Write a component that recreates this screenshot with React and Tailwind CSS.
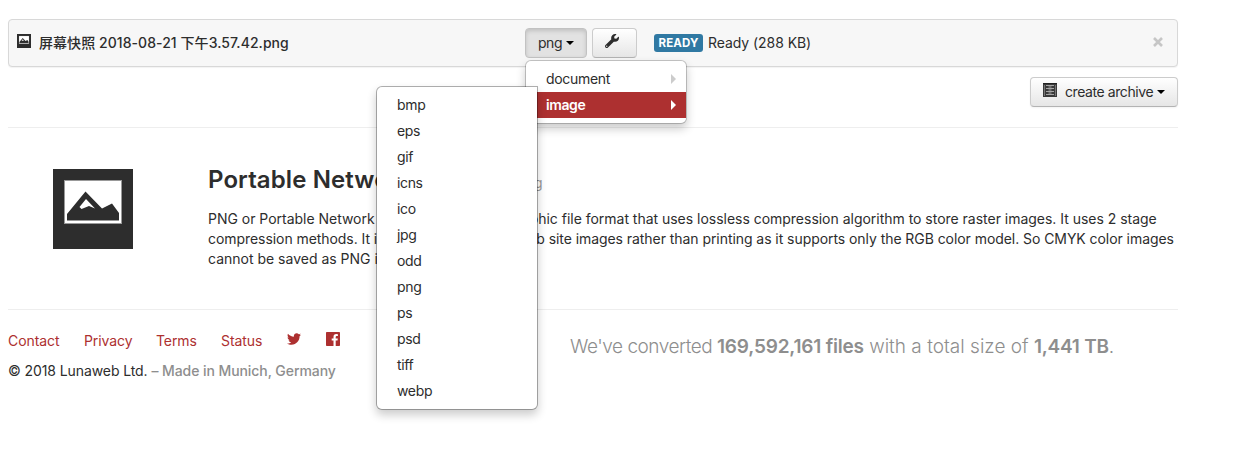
import React from "react";
import { FaWrench, FaTwitter } from "react-icons/fa";

const formats = ["bmp", "eps", "gif", "icns", "ico", "jpg", "odd", "png", "ps", "psd", "tiff", "webp"];

function Caret() {
  return <span className="inline-block border-x-4 border-t-4 border-x-transparent border-t-black" />;
}

function PictureIcon({ className }) {
  return (
    <svg viewBox="0 0 80 80" className={className}>
      <rect width="80" height="80" fill="#2d2d2d" />
      <rect x="11" y="11" width="58" height="44" fill="#999" />
      <rect x="12" y="12" width="56" height="42" fill="#fff" />
      <path d="M14 52V45L32.500 22.500 49 39.500 59 34.500 66 44V52Z" fill="#2d2d2d" />
      <path d="M33 30 42 39.500 36 37 28.500 40 26.500 38Z" fill="#fff" />
      <rect x="14" y="51" width="52" height="1" fill="#999" />
    </svg>
  );
}

function ArchiveIcon() {
  return (
    <svg viewBox="0 0 14 14" className="h-3.5 w-3.5">
      <rect width="14" height="14" fill="#3a3a3a" />
      <path d="M0 .5h14" stroke="#222" />
      <path d="M1.500 2v11M12.500 2v11" stroke="#777" />
      <path d="M3 2.500h8M3 5.500h8M3 8.500h8M3 11.500h8" stroke="#a5a5a5" />
      <path d="M5.500 4h3M5.500 7h3M5.500 10h3" stroke="#bbb" strokeWidth=".8" />
    </svg>
  );
}

function FacebookIcon() {
  return (
    <svg viewBox="0 0 14 14" className="h-3.5 w-3.5">
      <path
        fill="#ad3030"
        d="M.8 0H13.200Q14 0 14 .8V13.200Q14 14 13.200 14H9.700V8.600H11.500L11.800 6.500H9.700V5.100Q9.700 4.100 10.700 4.100H11.900V2.200Q11.200 2.100 10.300 2.100 7.500 2.100 7.500 4.900V6.500H5.700V8.600H7.500V14H.8Q0 14 0 13.200V.8Q0 0 .8 0Z"
      />
    </svg>
  );
}

function FormatMenu() {
  return (
    <div className="absolute left-0 top-[32px] z-10 h-[64px] w-[162px] rounded-md border border-black/20 bg-white bg-clip-padding py-[5px] shadow-[0_5px_10px_rgba(0,0,0,0.2)]">
      <div className="flex h-[26px] items-center justify-between pl-5 pr-[10px]">
        <span className="tracking-[-0.3px]">document</span>
        <span className="border-y-[5px] border-l-[5px] border-y-transparent border-l-[#ccc]" />
      </div>
      <div className="relative flex h-[26px] items-center justify-between bg-[#ad3030] pl-5 pr-[10px] text-white">
        <span className="font-semibold tracking-[-0.4px]">image</span>
        <span className="border-y-[5px] border-l-[5px] border-y-transparent border-l-white" />
        <ul className="absolute right-[148px] top-[-6px] w-[162px] rounded-md rounded-tr-none border border-black/30 bg-white bg-clip-padding py-[5px] tracking-[-0.35px] text-[#2d2d2d] shadow-[0_5px_10px_rgba(0,0,0,0.2)]">
          {formats.map((f) => (
            <li key={f} className="flex h-[26px] items-center pl-5">{f}</li>
          ))}
        </ul>
      </div>
    </div>
  );
}

function FileRow() {
  return (
    <div className="flex h-12 items-center rounded border border-[#d8d8d8] bg-[#f7f7f7] pl-2 pr-[14px] shadow-[0_1px_1px_rgba(0,0,0,0.05)]">
      <PictureIcon className="mb-1 h-3.5 w-3.5 shrink-0" />
      <div className="ml-2 w-[486px] whitespace-nowrap font-medium tracking-[0.06px]">屏幕快照 2018-08-21 下午3.57.42.png</div>
      <div className="relative">
        <button className="flex h-[30px] w-[62px] items-center justify-center gap-1 rounded border border-[#c2c2c2] bg-[#e2e2e2] tracking-[-0.4px] shadow-[inset_0_2px_4px_rgba(0,0,0,0.15)]">
          png <Caret />
        </button>
        <FormatMenu />
      </div>
      <button className="ml-[5px] flex h-[30px] w-[45px] items-start justify-center rounded border border-[#ccc] border-b-[#b3b3b3] bg-linear-to-b from-white to-[#e6e6e6] pr-1.5 pt-[5px]">
        <FaWrench className="h-[14px] w-[14px]" />
      </button>
      <span className="ml-[17px] flex h-[18px] w-[49px] items-center justify-center rounded-[3px] bg-[#3079a3] text-[11.500px] font-bold tracking-[0.1px] text-white">READY</span>
      <span className="ml-[5px] whitespace-nowrap tracking-[-0.06px]">Ready (288 KB)</span>
      <svg viewBox="0 0 10 10" className="mb-[3px] ml-auto h-2.5 w-2.5">
        <path d="M1 1 9 9M9 1 1 9" stroke="#c6c6c6" strokeWidth="2.600" />
      </svg>
    </div>
  );
}

function FormatInfo() {
  return (
    <section className="mt-5 flex h-[183px] border-y border-[#eee]">
      <PictureIcon className="ml-[45px] mt-[41px] h-20 w-20 shrink-0" />
      <div className="ml-[75px] mt-[32px] whitespace-nowrap">
        <h2 className="flex h-10 items-center text-2xl font-semibold">
          <span className="w-[305px] shrink-0 tracking-[0.1px]">Portable Network Graphics</span>
          <small className="pt-1.5 text-sm font-normal text-[#999]">.png</small>
        </h2>
        <p className="mt-[9px] leading-5">
          <span className="flex tracking-[-0.02px]">
            <span className="w-[300px] shrink-0">PNG or Portable Network Graphics is a raster</span>
            <span>graphic file format that uses lossless compression algorithm to store raster images. It uses 2 stage</span>
          </span>
          <span className="flex tracking-[-0.06px]">
            <span className="w-[309px] shrink-0">compression methods. It is more suited for</span>
            <span>web site images rather than printing as it supports only the RGB color model. So CMYK color images</span>
          </span>
          <span className="block">cannot be saved as PNG images.</span>
        </p>
      </div>
    </section>
  );
}

function Footer() {
  return (
    <footer className="flex whitespace-nowrap">
      <div className="mt-[21px] w-[562px]">
        <nav className="flex h-5 items-center tracking-[-0.08px] text-[#ad3030]">
          <a className="w-[76px]">Contact</a>
          <a className="w-[72px]">Privacy</a>
          <a className="w-[65px]">Terms</a>
          <a className="w-[66px]">Status</a>
          <a className="mb-[5px] w-[39px]"><FaTwitter className="h-3.5 w-3.5" /></a>
          <a className="mb-[4px]"><FacebookIcon /></a>
        </nav>
        <p className="mt-[10px] leading-5 tracking-[-0.09px]">© 2018 Lunaweb Ltd. <span className="font-medium tracking-[-0.07px] text-[#8e8e8e]">– Made in Munich, Germany</span></p>
      </div>
      <p className="mt-[22px] text-[19px] font-light leading-[30px] text-[#8e8e8e]">
        <span className="tracking-[-0.48px]">We've converted </span>
        <strong className="font-semibold tracking-[-0.2px]">169,592,161 files</strong>
        <span className="tracking-[0.02px]"> with a total size of </span>
        <strong className="font-semibold tracking-[-0.25px]">1,441 TB</strong>.
      </p>
    </footer>
  );
}

export default function App() {
  return (
    <main className="h-[470px] overflow-hidden bg-white pl-2 pt-[19px] font-['Inter','Noto_Sans_CJK_SC',sans-serif] text-sm text-[#2d2d2d]">
      <div className="w-[1170px]">
        <FileRow />
        <div className="mt-[10px] flex justify-end">
          <button className="flex h-[30px] w-[148px] items-center rounded border border-[#ccc] border-b-[#b3b3b3] bg-linear-to-b from-white to-[#e6e6e6] pl-3 shadow-[0_1px_2px_rgba(0,0,0,0.05)]">
            <span className="mb-1"><ArchiveIcon /></span>
            <span className="ml-2 mr-1 whitespace-nowrap tracking-[-0.42px]">create archive</span>
            <Caret />
          </button>
        </div>
        <FormatInfo />
        <Footer />
      </div>
    </main>
  );
}
